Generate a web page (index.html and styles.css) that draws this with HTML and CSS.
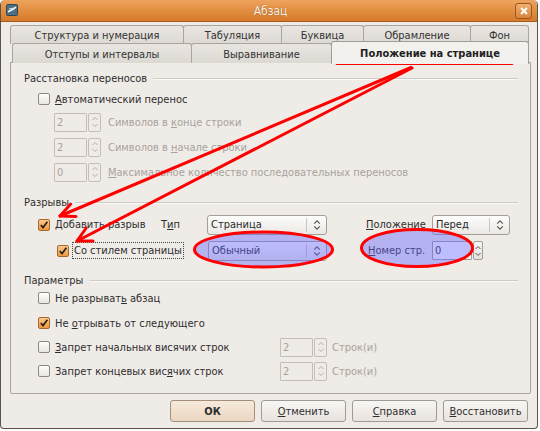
FILE: index.html
```html
<!DOCTYPE html>
<html>
<head>
<meta charset="utf-8">
<link rel="stylesheet" href="styles.css">
</head>
<body>
<div class="window">
  <div class="titlebar">
    <svg class="appicon" width="12" height="12" viewBox="0 0 12 12"><rect x="0.5" y="0.5" width="11" height="11" rx="1" fill="#4f6f86" stroke="#2f4657"/><path d="M2 8 C4 6 6 7 10 3" stroke="#fff" stroke-width="1.4" fill="none"/><path d="M3 5 L8 4" stroke="#dfe8ee" stroke-width="1"/></svg>
    <div class="title">Абзац</div>
    <div class="close"><svg width="10" height="10" viewBox="0 0 10 10"><path d="M2 2 L8 8 M8 2 L2 8" stroke="#fff" stroke-width="2"/></svg></div>
  </div>
  <div class="content">
    <div class="tabrow row1">
      <div class="tab t1">Структура и нумерация</div>
      <div class="tab t2">Табуляция</div>
      <div class="tab t3">Буквица</div>
      <div class="tab t4">Обрамление</div>
      <div class="tab t5">Фон</div>
    </div>
    <div class="tabrow row2">
      <div class="tab t6">Отступы и интервалы</div>
      <div class="tab t7">Выравнивание</div>
      <div class="tab t8 active">Положение на странице</div>
    </div>
    <div class="panel">
      <div class="heading"><span>Расстановка переносов</span><i class="rule"></i></div>
      <div class="row r-cb1 ind1">
        <span class="cb"></span><span class="lbl"><u>А</u>втоматический перенос</span>
      </div>
      <div class="row r-sp ind2 dis">
        <span class="spin dis"><span class="entry">2</span><span class="btns"><svg width="8" height="14" viewBox="0 0 8 14"><path d="M1.5 5 L4 2.5 L6.5 5 M1.5 9 L4 11.5 L6.5 9" fill="none" stroke="#b3afa9" stroke-width="1"/></svg></span></span>
        <span class="lbl sp-lbl">Символов в <u>к</u>онце строки</span>
      </div>
      <div class="row r-sp2 ind2 dis">
        <span class="spin dis"><span class="entry">2</span><span class="btns"><svg width="8" height="14" viewBox="0 0 8 14"><path d="M1.5 5 L4 2.5 L6.5 5 M1.5 9 L4 11.5 L6.5 9" fill="none" stroke="#b3afa9" stroke-width="1"/></svg></span></span>
        <span class="lbl sp-lbl">Символов в <u>н</u>ачале строки</span>
      </div>
      <div class="row r-sp2 ind2 dis">
        <span class="spin dis"><span class="entry">0</span><span class="btns"><svg width="8" height="14" viewBox="0 0 8 14"><path d="M1.5 5 L4 2.5 L6.5 5 M1.5 9 L4 11.5 L6.5 9" fill="none" stroke="#b3afa9" stroke-width="1"/></svg></span></span>
        <span class="lbl sp-lbl"><u>М</u>аксимальное количество последовательных переносов</span>
      </div>

      <div class="heading h2"><span>Разрывы</span><i class="rule"></i></div>
      <div class="row r-b1 ind1">
        <span class="cell c-add"><span class="cb on"><svg width="10" height="10" viewBox="0 0 10 10"><path d="M1.8 5 L4 7.6 L8.4 1.8" fill="none" stroke="#2b2216" stroke-width="1.7"/></svg></span><span class="lbl">Добавить разрыв</span></span>
        <span class="cell c-type">Т<u>и</u>п</span>
        <span class="combo w-type"><span class="ctext">Страница</span><span class="carr"><svg width="8" height="12" viewBox="0 0 8 12"><path d="M1.2 4.6 L4 1.8 L6.8 4.6 M1.2 7.4 L4 10.2 L6.8 7.4" fill="none" stroke="#555" stroke-width="1.1"/></svg></span></span>
        <span class="cell c-pos"><u>П</u>оложение</span>
        <span class="combo w-pos"><span class="ctext">Перед</span><span class="carr"><svg width="8" height="12" viewBox="0 0 8 12"><path d="M1.2 4.6 L4 1.8 L6.8 4.6 M1.2 7.4 L4 10.2 L6.8 7.4" fill="none" stroke="#555" stroke-width="1.1"/></svg></span></span>
      </div>
      <div class="row r-b2 ind3">
        <span class="cell c-style"><span class="cb on"><svg width="10" height="10" viewBox="0 0 10 10"><path d="M1.8 5 L4 7.6 L8.4 1.8" fill="none" stroke="#2b2216" stroke-width="1.7"/></svg></span><span class="lbl focus">Со стилем страницы</span></span>
        <span class="combo w-style"><span class="ctext">Обычный</span><span class="carr"><svg width="8" height="12" viewBox="0 0 8 12"><path d="M1.2 4.6 L4 1.8 L6.8 4.6 M1.2 7.4 L4 10.2 L6.8 7.4" fill="none" stroke="#555" stroke-width="1.1"/></svg></span></span>
        <span class="cell c-num"><u>Н</u>омер стр.</span>
        <span class="spin num"><span class="entry">0</span><span class="btns"><svg width="8" height="14" viewBox="0 0 8 14"><path d="M1.5 5 L4 2.5 L6.5 5 M1.5 9 L4 11.5 L6.5 9" fill="none" stroke="#555" stroke-width="1"/></svg></span></span>
      </div>

      <div class="heading h3"><span>Параметры</span><i class="rule"></i></div>
      <div class="row r-p1 ind1">
        <span class="cb"></span><span class="lbl">Не разрыват<u>ь</u> абзац</span>
      </div>
      <div class="row r-p2 ind1">
        <span class="cb on"><svg width="10" height="10" viewBox="0 0 10 10"><path d="M1.8 5 L4 7.6 L8.4 1.8" fill="none" stroke="#2b2216" stroke-width="1.7"/></svg></span><span class="lbl">Не <u>о</u>трывать от следующего</span>
      </div>
      <div class="row r-p3 ind1">
        <span class="cell c-wid"><span class="cb"></span><span class="lbl"><u>З</u>апрет начальных висячих строк</span></span>
        <span class="spin dis"><span class="entry">2</span><span class="btns"><svg width="8" height="14" viewBox="0 0 8 14"><path d="M1.5 5 L4 2.5 L6.5 5 M1.5 9 L4 11.5 L6.5 9" fill="none" stroke="#b3afa9" stroke-width="1"/></svg></span></span>
        <span class="lbl dis-t sp-lbl2">Строк(и)</span>
      </div>
      <div class="row r-p3 ind1">
        <span class="cell c-wid"><span class="cb"></span><span class="lbl">Запрет концевых вис<u>я</u>чих строк</span></span>
        <span class="spin dis"><span class="entry">2</span><span class="btns"><svg width="8" height="14" viewBox="0 0 8 14"><path d="M1.5 5 L4 2.5 L6.5 5 M1.5 9 L4 11.5 L6.5 9" fill="none" stroke="#b3afa9" stroke-width="1"/></svg></span></span>
        <span class="lbl dis-t sp-lbl2">Строк(и)</span>
      </div>
    </div>
    <div class="buttons">
      <div class="btn ok">ОК</div>
      <div class="btn"><u>О</u>тменить</div>
      <div class="btn"><u>С</u>правка</div>
      <div class="btn"><u>В</u>осстановить</div>
    </div>
  </div>
  <svg class="annot" width="540" height="431" viewBox="0 0 540 431">
    <ellipse cx="263.5" cy="249.5" rx="69" ry="17.5" fill="rgba(100,100,255,0.42)" stroke="#f00" stroke-width="3"/>
    <ellipse cx="417" cy="248" rx="55.5" ry="18.5" fill="rgba(100,100,255,0.42)" stroke="#f00" stroke-width="3"/>
    <line x1="337" y1="63.5" x2="512" y2="63.5" stroke="#f00" stroke-width="3" stroke-linecap="round"/>
    <line x1="411" y1="67.5" x2="60" y2="216" stroke="#f00" stroke-width="3" stroke-linecap="round"/>
    <line x1="412" y1="68" x2="77" y2="241" stroke="#f00" stroke-width="3" stroke-linecap="round"/>
    <path d="M76 216.5 L60 216 L70.7 204" fill="none" stroke="#f00" stroke-width="3" stroke-linecap="round" stroke-linejoin="round"/>
    <path d="M93 241 L77 241 L86.2 228" fill="none" stroke="#f00" stroke-width="3" stroke-linecap="round" stroke-linejoin="round"/>
  </svg>
</div>
</body>
</html>
```

FILE: styles.css
```css
* { box-sizing: border-box; }
html, body { margin: 0; padding: 0; background: #ffffff; }
body {
  font-family: "DejaVu Sans Condensed", "DejaVu Sans", "Liberation Sans", sans-serif;
  font-stretch: semi-condensed;
  font-size: 11px;
  color: #2e2e2e;
}
u { text-decoration: underline; text-underline-offset: 1px; }

.window {
  position: relative;
  width: 538px;
  height: 429px;
  background: #efebe7;
  border: 1px solid #57534d;
  border-top: none;
  border-radius: 5px 5px 4px 4px;
  overflow: hidden;
  display: flex;
  flex-direction: column;
}

.titlebar {
  height: 22px;
  flex: none;
  display: flex;
  align-items: center;
  background: linear-gradient(#eea45c, #df8a3c 60%, #d6792b);
  border-bottom: 1px solid #a75a1c;
  padding: 0 5px 0 5px;
}
.appicon { flex: none; margin-top: -1px; }
.title {
  flex: 1;
  text-align: center;
  color: #fbf3ea;
  font-size: 12px;
  text-shadow: 0 0 1px #8a4a18;
  padding-left: 8px;
}
.close {
  width: 17px;
  height: 16px;
  border: 1px solid #9b5520;
  border-radius: 3px;
  background: linear-gradient(#f0b070, #d98438);
  display: flex;
  align-items: center;
  justify-content: center;
}

.content { flex: 1; display: flex; flex-direction: column; }

.tabrow { display: flex; }
.row1 { margin: 3px 0 0 9px; height: 19px; }
.row2 { margin: -1px 0 0 11px; height: 20px; position: relative; z-index: 1; }
.tab {
  flex: none;
  height: 100%;
  border: 1px solid #aaa59e;
  border-bottom: none;
  border-radius: 3px 3px 0 0;
  background: linear-gradient(#e9e6e2, #dcd8d2);
  display: flex;
  align-items: center;
  justify-content: center;
  color: #333;
  padding-top: 1px;
}
.tab + .tab { margin-left: -1px; }
.t1 { width: 174px; }
.t2 { width: 99px; }
.t3 { width: 83px; }
.t4 { width: 108px; }
.t5 { width: 59px; }
.t6 { width: 180px; }
.t7 { width: 141px; }
.t8 { width: 198px; }
.tab.active {
  height: 23px;
  margin-top: -2px;
  background: #f3f1ee;
  font-weight: bold;
  color: #222;
  border-color: #a29d96;
}

.panel {
  margin: -1px 0 0 9px;
  width: 521px;
  height: 332px;
  border: 1px solid #a9a49d;
  border-radius: 0 0 2px 2px;
  padding: 7px 12px 0 13px;
  display: flex;
  flex-direction: column;
  background: #efebe7;
}

.heading {
  height: 16px;
  display: flex;
  align-items: center;
  color: #2e2e2e;
}
.heading .rule {
  flex: 1;
  height: 2px;
  border-top: 1px solid #cfcac4;
  border-bottom: 1px solid #fbfaf9;
  margin: 1px 0 0 6px;
}
.h2 { margin-top: 12px; }
.h3 { margin-top: 11px; }

.row { display: flex; align-items: center; height: 20px; flex: none; }
.ind1 { padding-left: 14px; }
.ind2 { padding-left: 30px; }
.ind3 { padding-left: 33px; }
.r-cb1 { margin-top: 3px; }
.r-sp { margin-top: 3px; }
.r-sp2 { margin-top: 5px; }
.r-b1 { margin-top: 4px; height: 21px; }
.r-b2 { margin-top: 5px; height: 21px; }
.r-p1 { margin-top: 0; }
.r-p2 { margin-top: 5px; }
.r-p3 { margin-top: 4px; }

.cb {
  flex: none;
  width: 12px;
  height: 12px;
  border: 1px solid #8d8882;
  border-radius: 2px;
  background: linear-gradient(#ffffff, #e9e6e2);
  display: flex;
  align-items: center;
  justify-content: center;
}
.cb.on {
  background: linear-gradient(#fbc98f, #ec9840);
  border-color: #a8682b;
}
.lbl { margin-left: 5px; white-space: nowrap; }
.dis .lbl, .dis-t { color: #a7a39d; }

.spin { display: flex; flex: none; height: 19px; }
.spin .entry {
  width: 33px;
  height: 100%;
  border: 1px solid #a29d97;
  background: #fff;
  display: flex;
  align-items: center;
  padding-left: 2px;
  border-radius: 1px;
}
.spin .btns {
  width: 13px;
  height: 100%;
  margin-left: 1px;
  border: 1px solid #a29d97;
  border-radius: 2px;
  background: linear-gradient(#f7f6f4, #e6e2dd);
  display: flex;
  align-items: center;
  justify-content: center;
}
.spin.dis .entry { background: #efebe7; border-color: #c3beb8; color: #a7a39d; }
.spin.dis .btns { border-color: #c3beb8; background: #efebe7; }
.sp-lbl { margin-left: 7px; }
.sp-lbl2 { margin-left: 5px; }

.cell { display: flex; align-items: center; flex: none; white-space: nowrap; height: 100%; }
.c-add { width: 123px; }
.c-type { width: 46px; }
.c-pos { width: 66px; margin-left: 39px; }
.c-style { width: 151px; }
.c-num { width: 64px; margin-left: 41px; }
.c-wid { width: 242px; }

.focus {
  margin-left: 3px;
  padding: 2px 1px 2px 1px;
  border: 1px dotted #444;
  height: 17px;
  display: flex;
  align-items: center;
}

.combo {
  flex: none;
  height: 20px;
  border: 1px solid #a39e98;
  border-radius: 3px;
  background: linear-gradient(#fdfdfc, #ebe8e4);
  display: flex;
  align-items: center;
}
.combo .ctext { flex: 1; padding-left: 3px; color: #2a2a2a; }
.combo .carr {
  width: 20px;
  height: 14px;
  border-left: 1px solid #c9c4be;
  display: flex;
  align-items: center;
  justify-content: center;
}
.w-type { width: 120px; }
.w-pos { width: 78px; }
.w-style { width: 119px; }
.spin.num .entry { width: 40px; }
.spin.num .btns { width: 10px; }
.spin.num { height: 19px; }

.buttons {
  display: flex;
  justify-content: flex-end;
  gap: 6px;
  margin: 6px 9px 0 0;
}
.btn {
  width: 85px;
  height: 22px;
  border: 1px solid #a09a93;
  border-radius: 3px;
  background: linear-gradient(#f8f6f4, #e7e3de);
  display: flex;
  align-items: center;
  justify-content: center;
  color: #2e2e2e;
}
.btn.ok {
  background: linear-gradient(#f7eadb, #ead7c2);
  font-weight: bold;
  border-color: #a58f7a;
}

.annot {
  position: absolute;
  left: -1px;
  top: 0;
  pointer-events: none;
}
```
